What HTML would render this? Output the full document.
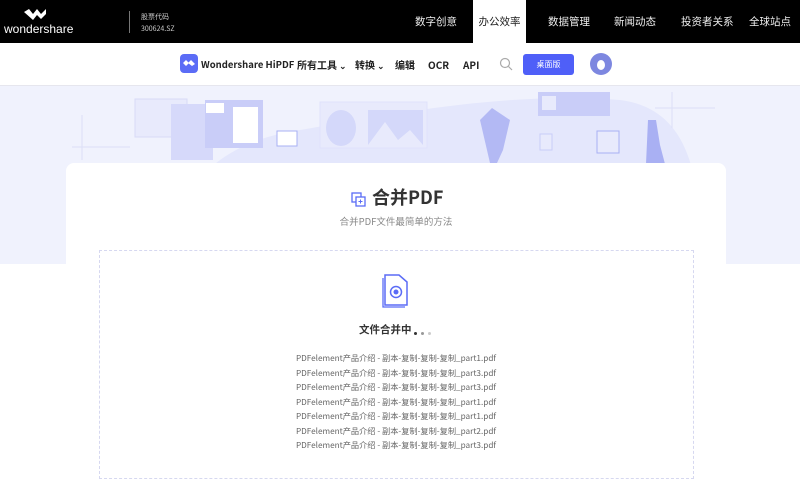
<!DOCTYPE html>
<html><head><meta charset="utf-8">
<style>
*{margin:0;padding:0;box-sizing:border-box}
body{width:800px;height:500px;overflow:hidden;background:#fff;font-family:"Noto Sans CJK SC","Liberation Sans",sans-serif;position:relative}
.top{position:absolute;left:0;top:0;width:800px;height:43px;background:#000;color:#fff}
.top .nav{position:absolute;top:0;height:43px;line-height:43px;font-size:10.5px;color:#eee}
.nav2{position:absolute;top:43px;left:0;width:800px;height:43px;background:#fff;border-bottom:1px solid #e6e6ee}
.nav2 span{position:absolute;top:0;line-height:43px;font-size:10px;font-weight:bold;color:#222}
.banner{position:absolute;top:86px;left:0;width:800px;height:178px;background:#f0f2fd;overflow:hidden}
.card{position:absolute;left:66px;top:163px;width:660px;height:340px;background:#fff;border-radius:8px}
.dash{position:absolute;left:99px;top:250px;width:595px;height:229px;border:1px dashed #d6d8f0}
.files{position:absolute;left:0;width:792px;top:351px;text-align:center;font-size:8.2px;color:#666;line-height:14.5px}
</style></head><body>
<div class="top">
  <svg style="position:absolute;left:24px;top:9px" width="22" height="14" viewBox="0 0 22 14"><path d="M0 3 L5 0 L9 5 L13 0 L17 5 L22 0 L22 5 L17 10 L13 6 L9 11 Z" fill="#fff"/></svg>
  <div style="position:absolute;left:4px;top:22px;font-size:12px;color:#fff;font-family:'Liberation Sans',sans-serif">wondershare</div>
  <div style="position:absolute;left:129px;top:11px;width:1px;height:22px;background:#777"></div>
  <div style="position:absolute;left:141px;top:11px;font-size:7px;color:#ccc;line-height:12px">股票代码<br>300624.SZ</div>
  <div class="nav" style="left:415px">数字创意</div>
  <div style="position:absolute;left:473px;top:0;width:53px;height:43px;background:#fff;color:#222;font-size:10.5px;line-height:43px;text-align:center">办公效率</div>
  <div class="nav" style="left:548px">数据管理</div>
  <div class="nav" style="left:614px">新闻动态</div>
  <div class="nav" style="left:681px">投资者关系</div>
  <div class="nav" style="left:749px">全球站点</div>
</div>
<div class="nav2">
  <div style="position:absolute;left:180px;top:11px;width:18px;height:19px;background:#5b6cf6;border-radius:4px"></div>
  <svg style="position:absolute;left:182px;top:15px" width="14" height="10"><path d="M1 5 L4 2 L7 5 L4 8Z M6 5 L9 2 L13 6 L10 8Z" fill="#fff"/></svg>
  <span style="left:201px;font-size:9.5px">Wondershare HiPDF</span>
  <span style="left:297px">所有工具 <small>⌄</small></span>
  <span style="left:355px">转换 <small>⌄</small></span>
  <span style="left:395px">编辑</span>
  <span style="left:428px">OCR</span>
  <span style="left:463px">API</span>
  <svg style="position:absolute;left:499px;top:14px" width="14" height="14"><circle cx="6" cy="6" r="4.5" stroke="#aaa" fill="none" stroke-width="1.2"/><path d="M9.5 9.5 L13 13" stroke="#aaa" stroke-width="1.2"/></svg>
  <div style="position:absolute;left:523px;top:11px;width:51px;height:21px;background:#4f5ff8;border-radius:3px;color:#fff;font-size:8px;line-height:21px;text-align:center">桌面版</div>
  <div style="position:absolute;left:590px;top:10px;width:22px;height:22px;border-radius:50%;background:#7d87e0"></div>
  <div style="position:absolute;left:597px;top:17px;width:8px;height:10px;border-radius:50%;background:#fff"></div>
</div>
<div class="banner">
  <svg width="800" height="178" viewBox="0 86 800 178">
    <path d="M170 264 C170 180 230 140 300 130 C360 120 500 90 620 100 C700 110 700 200 700 264Z" fill="#e4e7fc"/>
    <path d="M82 115 V160 M72 147 H130" stroke="#dcdff6"/>
    <path d="M672 92 V128 M655 108 H715" stroke="#dcdff6"/>
    <rect x="135" y="99" width="52" height="38" fill="#e8eafc" stroke="#d8dbf6"/>
    <rect x="171" y="104" width="42" height="56" fill="#d6d9fa"/>
    <rect x="205" y="100" width="58" height="48" fill="#c9cdf8"/>
    <rect x="233" y="107" width="25" height="36" fill="#fff"/>
    <rect x="206" y="103" width="18" height="10" fill="#fff"/>
    <rect x="277" y="131" width="20" height="15" fill="#fff" stroke="#a9b0f3"/>
    <rect x="320" y="102" width="107" height="46" fill="#e8eafc" stroke="#dfe2fb"/>
    <ellipse cx="341" cy="128" rx="15" ry="18" fill="#d4d8fa"/>
    <rect x="368" y="110" width="55" height="35" fill="#d4d8fa"/>
    <path d="M368 145 L385 122 L398 140 L410 130 L423 145Z" fill="#e8eafc"/>
    <path d="M480 120 L492 108 L510 120 L503 150 L497 163 L490 163 Z" fill="#b3b9f4"/>
    <rect x="538" y="92" width="72" height="24" fill="#c9cdf8"/>
    <rect x="542" y="96" width="14" height="14" fill="#e8eafc"/>
    <rect x="597" y="131" width="22" height="22" fill="#e8eafc" stroke="#a9b0f3"/>
    <rect x="540" y="134" width="12" height="16" fill="#e8eafc" stroke="#c9cdf8"/>
    <path d="M648 120 L656 120 L660 145 L665 164 L646 164 Z" fill="#a9b0f3"/>
  </svg>
</div>
<div class="card"></div>
<svg style="position:absolute;left:351px;top:192px" width="15" height="15"><rect x="1" y="1" width="9" height="9" fill="none" stroke="#5b6cf6" stroke-width="1.3"/><rect x="5" y="5" width="9" height="9" fill="#fff" stroke="#5b6cf6" stroke-width="1.3"/><path d="M9.5 7.5V11.5M7.5 9.5H11.5" stroke="#5b6cf6"/></svg>
<div style="position:absolute;left:372px;top:184px;font-size:18px;font-weight:bold;color:#333">合并PDF</div>
<div style="position:absolute;left:0;width:792px;top:214px;text-align:center;font-size:9.5px;color:#888">合并PDF文件最简单的方法</div>
<div class="dash"></div>
<svg style="position:absolute;left:381px;top:271px" width="30" height="38"><path d="M4 4 H18 L26 11 V34 H4 Z" fill="#fff" stroke="#5b6cf6" stroke-width="1.5"/><path d="M2 7 V36 H24" fill="none" stroke="#5b6cf6" stroke-width="1.3"/><circle cx="15" cy="21" r="5.5" fill="none" stroke="#5b6cf6" stroke-width="1.5"/><circle cx="15" cy="21" r="2.5" fill="#5b6cf6"/></svg>
<div style="position:absolute;left:359px;top:322px;font-size:10.5px;font-weight:bold;color:#333">文件合并中</div>
<div style="position:absolute;left:414px;top:332px;width:3px;height:3px;border-radius:50%;background:#333"></div>
<div style="position:absolute;left:421px;top:332px;width:3px;height:3px;border-radius:50%;background:#999"></div>
<div style="position:absolute;left:428px;top:332px;width:3px;height:3px;border-radius:50%;background:#ccc"></div>
<div class="files">
PDFelement产品介绍 - 副本-复制-复制-复制_part1.pdf<br>
PDFelement产品介绍 - 副本-复制-复制-复制_part3.pdf<br>
PDFelement产品介绍 - 副本-复制-复制-复制_part3.pdf<br>
PDFelement产品介绍 - 副本-复制-复制-复制_part1.pdf<br>
PDFelement产品介绍 - 副本-复制-复制-复制_part1.pdf<br>
PDFelement产品介绍 - 副本-复制-复制-复制_part2.pdf<br>
PDFelement产品介绍 - 副本-复制-复制-复制_part3.pdf
</div>
</body></html>
